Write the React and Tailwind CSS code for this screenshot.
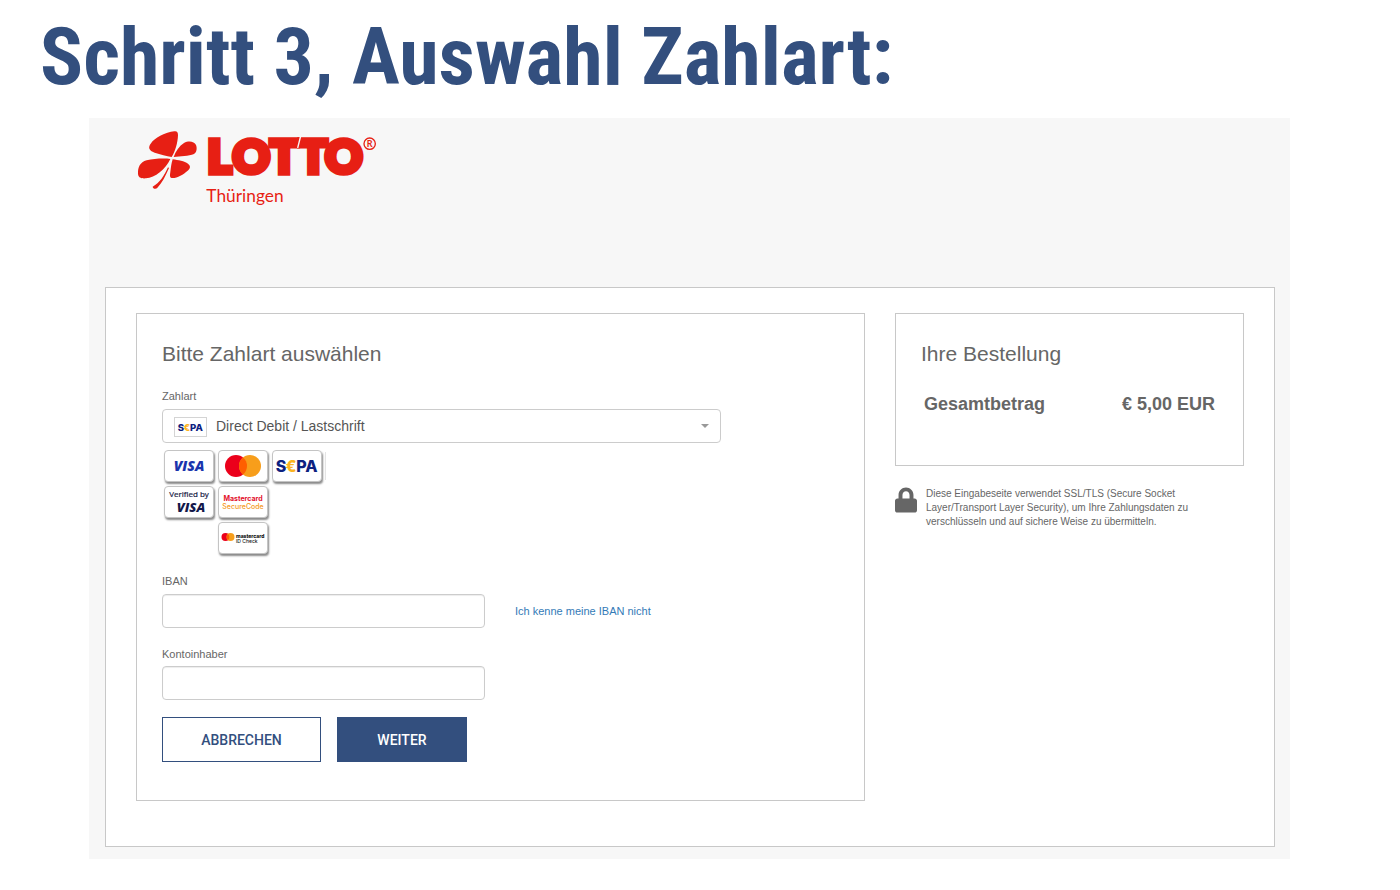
import React from "react";
import { FaLock } from "react-icons/fa";

function LottoLogo() {
  return (
    <svg
      viewBox="48 42 726 252"
      className="block h-[84px] w-[242px]"
      role="img"
      aria-label="LOTTO Thüringen"
      fill="#e71f14"
    >
      <path d="M155 141C140 137 121 134 104 128C86 121 84 112 92 101C105 83 136 67 163 64C171 63 174 66 174 76C173 99 166 124 155 141Z" />
      <path d="M161 141C167 123 178 108 192 99C206 91 223 94 228 105C232 115 230 128 222 132C206 138 181 139 161 141Z" />
      <path d="M151 147C136 145 104 145 80 151C60 156 53 173 54 192C55 203 63 206 78 205C105 203 137 178 151 147Z" />
      <path d="M158 148C174 150 194 154 204 161C213 168 211 175 203 182C191 193 172 204 158 204C149 204 149 198 151 186C153 171 154 160 158 148Z" />
      <path d="M144 172C133 196 119 220 98 230C98 235 105 238 111 235C127 218 137 197 147 174Z" />
      <text
        x="298 394 492 580 671"
        y="190"
        textAnchor="middle"
        fontFamily="Lato, sans-serif"
        fontWeight="900"
        fontSize="137"
        stroke="#e71f14"
        strokeWidth="17"
      >
        LOTTO
      </text>
      <path d="M542 78L533 114" stroke="#f7f7f7" strokeWidth="4" />
      <circle cx="749" cy="101" r="17" fill="none" stroke="#e71f14" strokeWidth="4" />
      <text x="749" y="111" textAnchor="middle" fontFamily="Lato, sans-serif" fontWeight="700" fontSize="27">
        R
      </text>
      <text x="259" y="276" fontFamily="Lato, sans-serif" fontSize="52">
        Thüringen
      </text>
    </svg>
  );
}

function SepaMark({ className }) {
  return (
    <svg viewBox="0 0 48 30" className={className} role="img" aria-label="SEPA">
      <g fontFamily="Inter, sans-serif" fontWeight="800" fontSize="16" textAnchor="middle">
        <text x="8" y="21" fill="#0d2180">S</text>
        <text x="18" y="21" fill="#fbb41f">€</text>
        <text x="34" y="21" fill="#0d2180">PA</text>
      </g>
    </svg>
  );
}

function Badge({ children, className = "" }) {
  return (
    <div
      className={`h-8 w-[50px] overflow-hidden rounded-[4px] border border-[#c4c4c4] bg-white shadow-[1px_2px_2px_#8a8a8a] ${className}`}
    >
      {children}
    </div>
  );
}

function PaymentBadges() {
  return (
    <div className="mt-[7px] ml-0.5 grid grid-cols-[repeat(3,50px)] gap-1">
      <Badge>
        <svg viewBox="0 0 48 30" className="size-full">
          <text x="24" y="20" textAnchor="middle" fontFamily="'Open Sans', sans-serif" fontWeight="800" fontStyle="italic" fontSize="14" fill="#1a34ad">
            VISA
          </text>
        </svg>
      </Badge>
      <Badge>
        <svg viewBox="0 0 48 30" className="size-full" role="img" aria-label="Mastercard">
          <circle cx="17" cy="15" r="11" fill="#eb001b" />
          <circle cx="31" cy="15" r="11" fill="#f79e1b" />
          <path d="M24 6.5a11 11 0 0 1 0 17a11 11 0 0 1 0-17Z" fill="#ff5f00" />
        </svg>
      </Badge>
      <div className="flex items-start gap-[3px]">
        <Badge className="shrink-0">
          <SepaMark className="size-full" />
        </Badge>
        <span className="mt-0.5 h-7 w-px shrink-0 bg-[#e4e4e4]" />
      </div>
      <Badge>
        <svg viewBox="0 0 48 30" className="size-full">
          <text x="24" y="10" textAnchor="middle" fontFamily="'Open Sans', sans-serif" fontSize="8" fill="#15183f" stroke="#15183f" strokeWidth="0.2">
            Verified by
          </text>
          <text x="26" y="25" textAnchor="middle" fontFamily="'Open Sans', sans-serif" fontWeight="800" fontStyle="italic" fontSize="13" fill="#13174a">
            VISA
          </text>
        </svg>
      </Badge>
      <Badge>
        <svg viewBox="0 0 48 30" className="size-full" textAnchor="middle" fontFamily="Inter, sans-serif">
          <text x="24" y="14" fontWeight="700" fontSize="7" fill="#e3122d">
            Mastercard
          </text>
          <text x="24" y="22" fontWeight="500" fontSize="7" fill="#f59a1c">
            SecureCode
          </text>
        </svg>
      </Badge>
      <Badge className="col-start-2">
        <svg viewBox="0 0 48 30" className="size-full" fontFamily="Inter, sans-serif" fill="#111111">
          <circle cx="6.5" cy="14" r="4" fill="#eb001b" />
          <circle cx="11.5" cy="14" r="4" fill="#f79e1b" />
          <path d="M9 11a4 4 0 0 1 0 6a4 4 0 0 1 0-6Z" fill="#ff5f00" />
          <text x="17" y="15" fontWeight="800" fontSize="5">
            mastercard
          </text>
          <text x="17" y="20" fontWeight="500" fontSize="5">
            ID Check
          </text>
        </svg>
      </Badge>
    </div>
  );
}

const labelClass = "block text-[11px] leading-4 text-[#666666]";
const inputClass =
  "h-[34px] w-[323px] rounded-[4px] border border-[#cccccc] bg-white px-3 text-sm text-[#555555] shadow-[inset_0_1px_1px_rgba(0,0,0,0.075)]";

function PaymentForm() {
  return (
    <form
      className="border border-[#c8c8c8] px-[25px] pt-[25px] pb-[38px]"
      onSubmit={(event) => event.preventDefault()}
    >
      <h2 className="text-[21px] leading-[30px] text-[#666666]">Bitte Zahlart auswählen</h2>

      <label htmlFor="method" className={`mt-[19px] mb-[5px] ${labelClass}`}>
        Zahlart
      </label>
      <div className="relative w-full max-w-[559px]">
        <select
          id="method"
          className="h-[34px] w-full appearance-none rounded-[4px] border border-[#cccccc] bg-white pr-8 pl-[53px] text-sm text-[#555555]"
        >
          <option>Direct Debit / Lastschrift</option>
        </select>
        <span className="pointer-events-none absolute top-2 left-3 h-5 w-[33px] border border-[#d4d4d4] bg-white">
          <SepaMark className="size-full" />
        </span>
        <svg viewBox="0 0 8 4" className="pointer-events-none absolute top-[15px] right-3 h-1 w-2" fill="#999999">
          <path d="M0 0h8L4 4Z" />
        </svg>
      </div>

      <PaymentBadges />

      <label htmlFor="iban" className={`mt-[19px] mb-[5px] ${labelClass}`}>
        IBAN
      </label>
      <div className="flex items-center gap-[30px]">
        <input id="iban" type="text" className={inputClass} />
        <a href="#iban" className="text-[11px] leading-4 text-[#337ab7]">
          Ich kenne meine IBAN nicht
        </a>
      </div>

      <label htmlFor="owner" className={`mt-[18px] mb-1 ${labelClass}`}>
        Kontoinhaber
      </label>
      <input id="owner" type="text" className={`block ${inputClass}`} />

      <div className="mt-[17px] flex gap-4 font-[Roboto,sans-serif] text-sm font-medium">
        <button type="button" className="h-[45px] w-[159px] border border-[#334f7e] bg-white text-[#334f7e]">
          ABBRECHEN
        </button>
        <button type="submit" className="h-[45px] w-[130px] border border-[#334f7e] bg-[#334f7e] text-white">
          WEITER
        </button>
      </div>
    </form>
  );
}

function OrderSummary() {
  return (
    <aside>
      <section className="border border-[#c8c8c8] px-[25px] pt-[25px] pb-[46px]">
        <h2 className="text-[21px] leading-[30px] text-[#666666]">Ihre Bestellung</h2>
        <table className="mt-5 w-full text-lg leading-[30px] text-[#666666]">
          <tbody>
            <tr>
              <th scope="row" className="pl-[3px] text-left font-bold">
                Gesamtbetrag
              </th>
              <td className="pr-[3px] text-right font-bold">€ 5,00 EUR</td>
            </tr>
          </tbody>
        </table>
      </section>
      <div className="mt-[21px] flex gap-[9px] text-[#666666]">
        <FaLock className="h-[26px] w-[22px] shrink-0" />
        <p className="max-w-[290px] text-[10px] leading-[14px]">
          Diese Eingabeseite verwendet SSL/TLS (Secure Socket Layer/Transport Layer Security), um Ihre
          Zahlungsdaten zu verschlüsseln und auf sichere Weise zu übermitteln.
        </p>
      </div>
    </aside>
  );
}

export default function App() {
  return (
    <div className="min-h-screen bg-white pb-[31px] font-['Liberation_Sans',Arial,sans-serif]">
      <h1 className="pt-[17px] pl-10 font-['Roboto_Condensed',Roboto,sans-serif] text-[80px] leading-[80px] font-bold text-[#334f7e]">
        Schritt 3, Auswahl Zahlart:
      </h1>
      <div className="mt-[21px] mr-[110px] ml-[89px] bg-[#f7f7f7] pr-[15px] pb-3 pl-4">
        <header className="h-[169px] pt-1.5 pl-[31px]">
          <LottoLogo />
        </header>
        <main className="grid grid-cols-[729fr_349fr] items-start gap-[30px] border border-[#c8c8c8] bg-white px-[30px] pt-[25px] pb-[45px]">
          <PaymentForm />
          <OrderSummary />
        </main>
      </div>
    </div>
  );
}
